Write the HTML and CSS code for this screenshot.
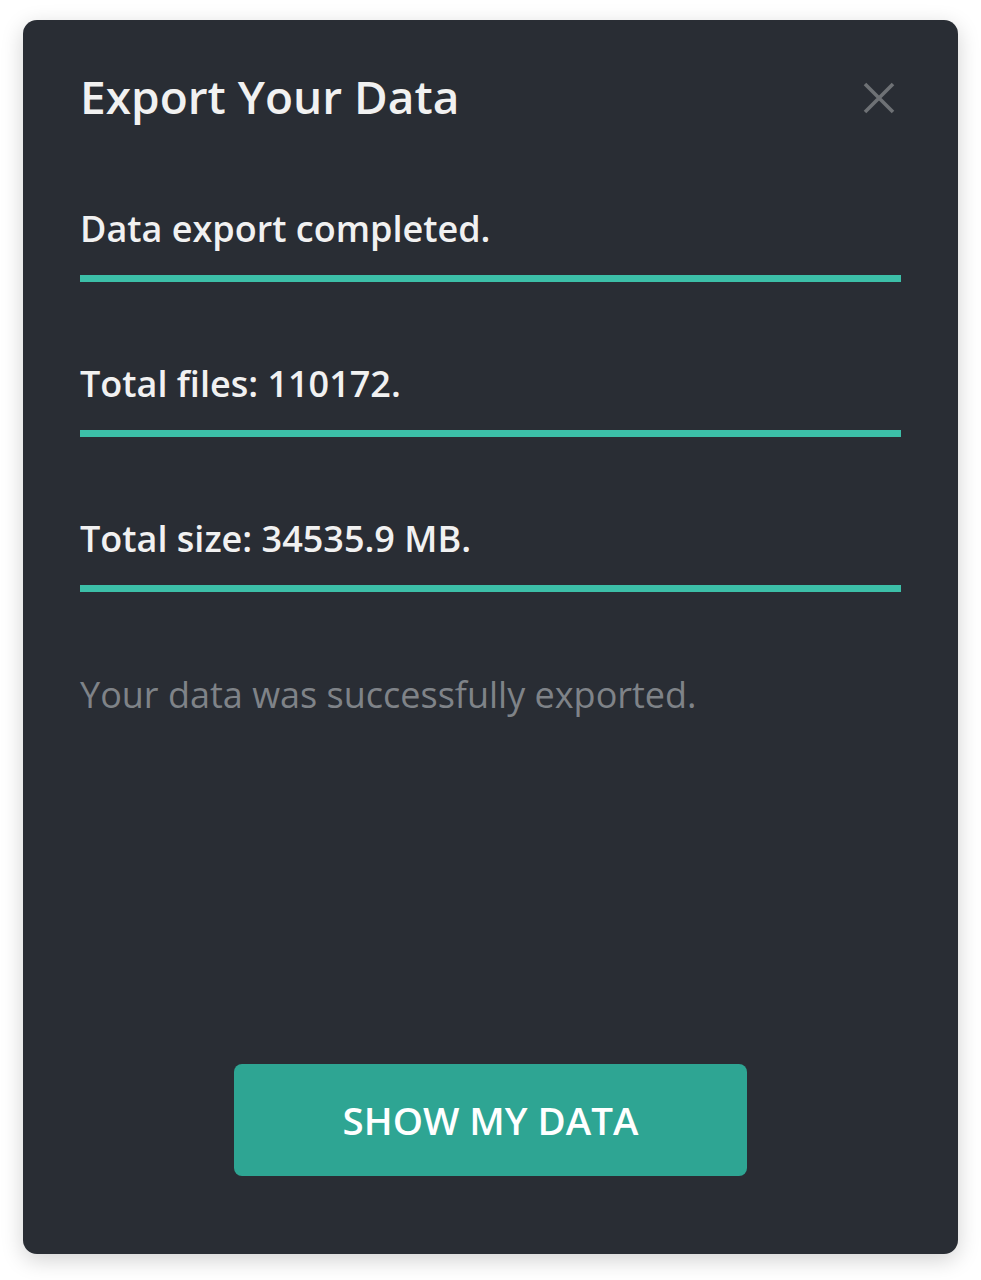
FILE: index.html
```html
<!DOCTYPE html>
<html lang="en">

<head>
  <meta charset="UTF-8">
  <meta name="viewport" content="width=device-width, initial-scale=1.0">
  <title>Export Your Data</title>
  <link rel="stylesheet" href="styles.css">
</head>

<body>

  <main class="dialog">

    <div class="dialogHeader">
      <h1>Export Your Data</h1>
      <button class="closeButton" aria-label="Close">
        <svg width="32" height="32" viewBox="0 0 32 32">
          <path d="M2 2 L30 30 M30 2 L2 30" stroke="#6e7175" stroke-width="3.6" fill="none" />
        </svg>
      </button>
    </div>

    <!-- Export result rows -->
    <div class="statRow">Data export completed.</div>
    <div class="statRow">Total files: 110172.</div>
    <div class="statRow">Total size: 34535.9 MB.</div>

    <p class="note">Your data was successfully exported.</p>

    <div class="dialogFooter">
      <button class="showButton">SHOW MY DATA</button>
    </div>
  </main>

</body>

</html>
```

FILE: styles.css
```css
body {
  font-family: 'Open Sans', 'Noto Sans', sans-serif;
  background-color: #ffffff;
  margin: 0;
  padding: 20px 23px 26px 23px;
}

.dialog {
  background-color: #292d34;
  border-radius: 14px;
  box-shadow: 0 6px 22px rgba(0, 0, 0, 0.18);
  width: 935px;
  height: 1234px;
  box-sizing: border-box;
  padding: 0 57px;
  display: flex;
  flex-direction: column;
}

.dialogHeader {
  display: flex;
  justify-content: space-between;
  align-items: flex-start;
  padding-top: 45px;
  margin-bottom: 76px;
}

h1 {
  margin: 0;
  font-size: 46px;
  font-weight: 600;
  line-height: 63px;
  color: #f1f1f1;
}

.closeButton {
  background: none;
  border: none;
  padding: 0;
  margin-top: 17px;
  margin-right: 6px;
  cursor: pointer;
  display: flex;
}

.statRow {
  font-size: 36px;
  font-weight: 600;
  line-height: 49px;
  color: #f1f1f1;
  padding: 0 0 22px 0;
  border-bottom: 7px solid #3cbfa8;
  margin-bottom: 77px;
}

.note {
  margin: 1px 0 0 0;
  font-size: 36px;
  line-height: 49px;
  color: #7f8388;
}

.dialogFooter {
  margin-top: auto;
  display: flex;
  justify-content: center;
  padding-bottom: 78px;
}

.showButton {
  width: 513px;
  height: 112px;
  background-color: #2ea593;
  color: #ffffff;
  border: none;
  border-radius: 8px;
  font-family: 'Open Sans', 'Noto Sans', sans-serif;
  font-size: 38.5px;
  font-weight: 600;
  cursor: pointer;
}
```
